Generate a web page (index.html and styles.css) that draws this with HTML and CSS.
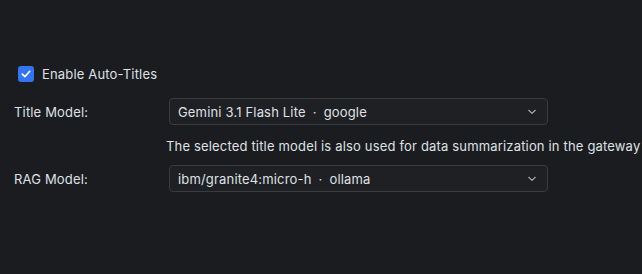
FILE: index.html
```html
<!DOCTYPE html>
<html>
<head>
<meta charset="utf-8">
<link rel="stylesheet" href="styles.css">
</head>
<body>
<div class="panel">
  <label class="check-row">
    <span class="checkbox">
      <svg width="12" height="12" viewBox="0 0 12 12"><path d="M2.3 6.2 L4.9 8.7 L9.7 3.3" fill="none" stroke="#ffffff" stroke-width="1.7" stroke-linecap="round" stroke-linejoin="round"/></svg>
    </span>
    <span class="check-label">Enable Auto-Titles</span>
  </label>
  <div class="form">
    <div class="label">Title Model:</div>
    <div class="select">
      <span class="value">Gemini 3.1 Flash Lite<span class="sep">·</span>google</span>
      <svg class="chev" width="10" height="6" viewBox="0 0 10 6"><path d="M1.8 1.3 L5 4.4 L8.2 1.3" fill="none" stroke="#a8aab0" stroke-width="1.2" stroke-linecap="round" stroke-linejoin="round"/></svg>
    </div>
    <div class="hint">The selected title model is also used for data summarization in the gateway</div>
    <div class="label">RAG Model:</div>
    <div class="select">
      <span class="value">ibm/granite4:micro-h<span class="sep">·</span>ollama</span>
      <svg class="chev" width="10" height="6" viewBox="0 0 10 6"><path d="M1.8 1.3 L5 4.4 L8.2 1.3" fill="none" stroke="#a8aab0" stroke-width="1.2" stroke-linecap="round" stroke-linejoin="round"/></svg>
    </div>
  </div>
</div>
</body>
</html>
```
FILE: styles.css
```css
html, body {
  margin: 0;
  padding: 0;
  background: #1b1c1f;
  overflow: hidden;
}
body {
  font-family: Inter, "Noto Sans", sans-serif;
  font-size: 13px;
  letter-spacing: 0.17px;
  color: #dfe1e5;
  width: 642px;
  height: 274px;
}
.panel {
  padding: 66px 0 0 14px;
}
.check-row {
  display: flex;
  align-items: center;
  gap: 8px;
  margin-left: 4px;
  height: 16px;
}
.checkbox {
  width: 16px;
  height: 16px;
  border-radius: 3px;
  background: #3574f0;
  display: flex;
  align-items: center;
  justify-content: center;
}
.checkbox svg { display: block; }
.check-label {
  line-height: 16px;
}
.form {
  display: grid;
  grid-template-columns: 152px auto;
  align-items: center;
  margin-top: 16px;
  white-space: nowrap;
}
.label {
  line-height: 16px;
}
.select {
  margin-left: 3px;
  height: 25px;
  border: 1px solid #393b40;
  border-radius: 4px;
  background: #1f2023;
  display: flex;
  align-items: center;
  justify-content: space-between;
  padding: 0 10px 0 8px;
  box-sizing: content-box;
  width: 359px;
}
.value {
  line-height: 16px;
}
.sep {
  margin: 0 7px;
}
.chev { display: block; }
.hint {
  grid-column: 2;
  line-height: 16px;
  margin: 13px 0 11px;
}
```
